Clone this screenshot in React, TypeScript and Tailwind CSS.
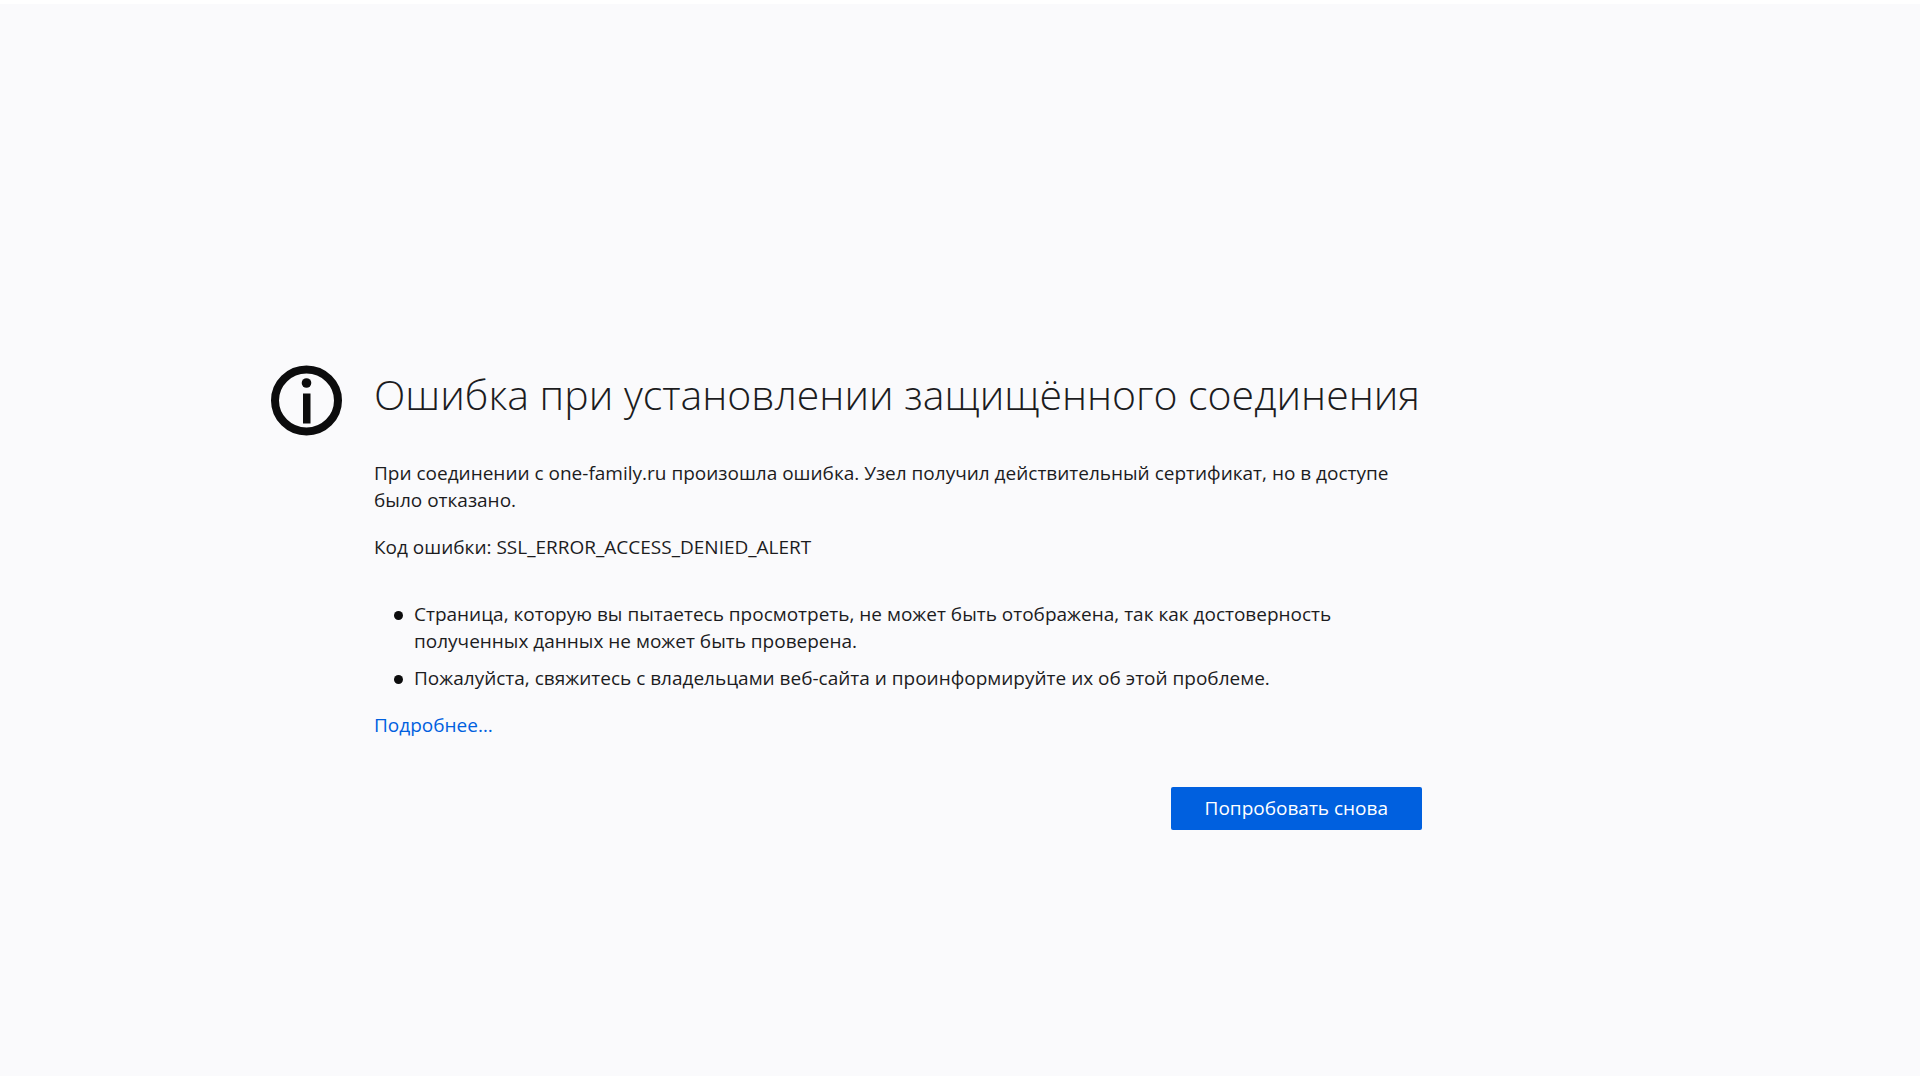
const tips = [
  "Страница, которую вы пытаетесь просмотреть, не может быть отображена, так как достоверность полученных данных не может быть проверена.",
  "Пожалуйста, свяжитесь с владельцами веб-сайта и проинформируйте их об этой проблеме."
]

const InfoIcon = () => {
  return (
    <svg
      className="w-[72px] h-[72px] mt-px shrink-0"
      viewBox="0 0 72 72"
      aria-hidden="true"
    >
      <ellipse cx="36.5" cy="35.5" rx="31.5" ry="31" fill="none" stroke="#0c0c0d" strokeWidth="8" />
      <circle cx="36.5" cy="18" r="4.8" fill="#0c0c0d" />
      <rect x="33" y="28.5" width="7.5" height="30" fill="#0c0c0d" />
    </svg>
  )
}

export default function App() {
  return (
    <div className="min-h-screen flex flex-col bg-[#fafafc] border-y-4 border-white font-['Open_Sans',sans-serif] text-[#1c1c1e]">
      <main className="flex items-start gap-8 max-w-[1422px] pl-[270px] pt-[360px] text-[19px] leading-[27px]">
        <InfoIcon />
        <div className="flex-1 min-w-0">
          <h1 className="text-[41px] leading-[60px] font-light">
            Ошибка при установлении защищённого соединения
          </h1>
          <p className="mt-9">
            При соединении с one-family.ru произошла ошибка. Узел получил
            действительный сертификат, но в доступе было отказано.
          </p>
          <p className="mt-5">Код ошибки: SSL_ERROR_ACCESS_DENIED_ALERT</p>
          <ul className="mt-10 pl-10 flex flex-col gap-[10px]">
            {tips.map((tip) => (
              <li key={tip} className="relative">
                <span className="absolute -left-5 top-[10px] size-[9px] rounded-full bg-[#0c0c0d]" />
                {tip}
              </li>
            ))}
          </ul>
          <a href="#" className="inline-block mt-5 text-[#0060df]">
            Подробнее…
          </a>
          <div className="flex justify-end mt-12">
            <button
              type="button"
              className="h-[43px] px-[34px] rounded-xs bg-[#0060df] text-white"
            >
              Попробовать снова
            </button>
          </div>
        </div>
      </main>
    </div>
  )
}
